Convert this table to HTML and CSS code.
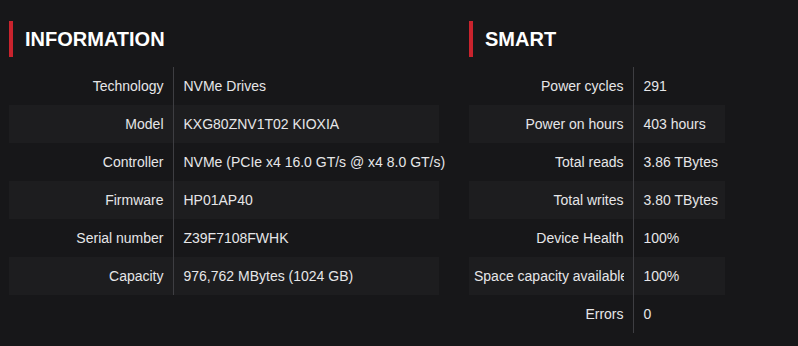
FILE: index.html
```html
<!DOCTYPE html>
<html>
<head>
<meta charset="utf-8">
<link rel="stylesheet" href="styles.css">
</head>
<body>
<div class="page">
  <section class="panel panel-info">
    <h2 class="title">INFORMATION</h2>
    <table class="kv kv-info">
      <tr><td class="k"><div class="kt">Technology</div></td><td class="v">NVMe Drives</td></tr>
      <tr><td class="k"><div class="kt">Model</div></td><td class="v">KXG80ZNV1T02 KIOXIA</td></tr>
      <tr><td class="k"><div class="kt">Controller</div></td><td class="v">NVMe (PCIe x4 16.0 GT/s @ x4 8.0 GT/s)</td></tr>
      <tr><td class="k"><div class="kt">Firmware</div></td><td class="v">HP01AP40</td></tr>
      <tr><td class="k"><div class="kt">Serial number</div></td><td class="v">Z39F7108FWHK</td></tr>
      <tr><td class="k"><div class="kt">Capacity</div></td><td class="v">976,762 MBytes (1024 GB)</td></tr>
    </table>
  </section>
  <section class="panel panel-smart">
    <h2 class="title">SMART</h2>
    <table class="kv kv-smart">
      <tr><td class="k"><div class="kt">Power cycles</div></td><td class="v">291</td></tr>
      <tr><td class="k"><div class="kt">Power on hours</div></td><td class="v">403 hours</td></tr>
      <tr><td class="k"><div class="kt">Total reads</div></td><td class="v">3.86 TBytes</td></tr>
      <tr><td class="k"><div class="kt">Total writes</div></td><td class="v">3.80 TBytes</td></tr>
      <tr><td class="k"><div class="kt">Device Health</div></td><td class="v">100%</td></tr>
      <tr><td class="k"><div class="kt">Space capacity available</div></td><td class="v">100%</td></tr>
      <tr><td class="k"><div class="kt">Errors</div></td><td class="v">0</td></tr>
    </table>
  </section>
</div>
</body>
</html>
```
FILE: styles.css
```css
html, body {
  margin: 0;
  padding: 0;
  background: #171719;
  color: #e6e6e8;
  font-family: "Liberation Sans", Arial, sans-serif;
}
.page {
  display: flex;
  gap: 30px;
  padding: 21px 0 0 9px;
  height: 346px;
  box-sizing: border-box;
}
.panel {
  display: flex;
  flex-direction: column;
}
.title {
  margin: 0 0 10px 0;
  height: 36px;
  border-left: 4px solid #c9232d;
  padding-left: 12px;
  font-size: 20px;
  font-weight: bold;
  line-height: 37px;
  color: #ffffff;
}
.kv {
  border-collapse: collapse;
  table-layout: fixed;
  font-size: 14px;
}
.kv-info { width: 430px; }
.kv-smart { width: 256px; }
.kv tr { height: 38px; }
.kv tr:nth-child(even) { background: #1d1d1f; }
.kv td { padding: 0; vertical-align: middle; }
.kv .k {
  width: 164px;
  box-sizing: border-box;
  padding-left: 5px;
  padding-right: 9px;
  border-right: 1px solid #3e3e42;
}
.kt {
  text-align: right;
  white-space: nowrap;
  overflow: hidden;
}
.kv .v {
  padding-left: 10px;
  white-space: nowrap;
}
```
